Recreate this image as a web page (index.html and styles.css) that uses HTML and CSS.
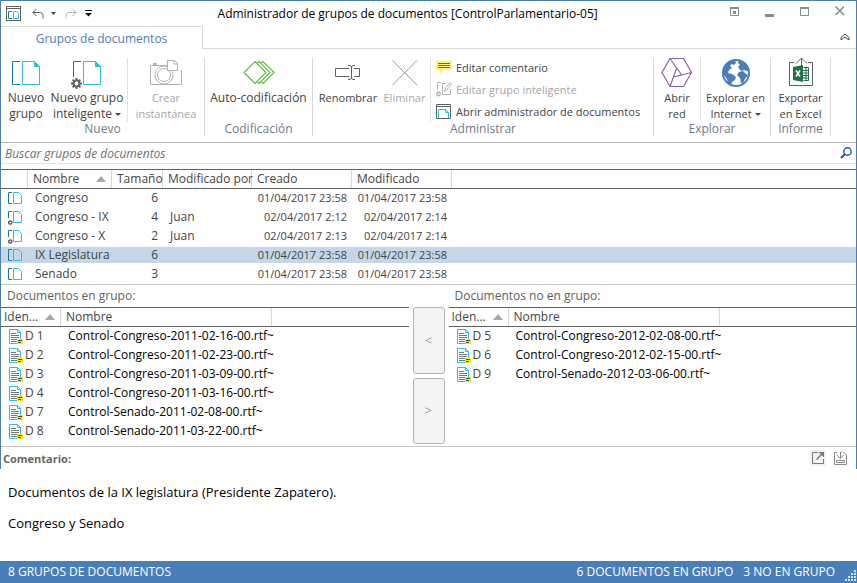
FILE: index.html
```html
<!DOCTYPE html>
<html lang="es">
<head>
<meta charset="utf-8">
<meta name="viewport" content="width=device-width, initial-scale=1">
<title>Administrador de grupos de documentos</title>
<link rel="stylesheet" href="styles.css">
</head>
<body>
<svg class="defs" aria-hidden="true">
  <symbol id="group" viewBox="0 0 16 16"><path d="M4 2.500H.5V13.500H4" fill="none" stroke="#0f7f93"/><path d="M5.500 2.500H10.500L13.500 5.500V13.500H5.500Z" fill="none" stroke="#2bbde3"/></symbol>
  <symbol id="smart" viewBox="0 0 16 16"><path d="M4 2.500H.5V9" fill="none" stroke="#0f7f93"/><path d="M5.500 2.500H10.500L13.500 5.500V13.500H5.500Z" fill="none" stroke="#2bbde3"/><circle cx="2.300" cy="13.500" r="1.600" fill="#fff" stroke="#5d6166" stroke-width="1.500"/></symbol>
  <symbol id="doc" viewBox="0 0 16 16"><path d="M9 15.500H1.500V1.500H9.500L12.500 4.500V11" fill="none" stroke="#2bbde3"/><path d="M9.500 1.500V4.500H12.500" fill="none" stroke="#2bbde3"/><path d="M3 5.500H8M3 7.500H11M3 9.500H11M3 11.500H9M3 13.500H9" stroke="#70757c"/><path d="M9 11H15V16H11L9 16Z" fill="#ffe60a"/><path d="M10 12.500H14M10 14.500H13" stroke="#4c4a20"/></symbol>
</svg>
<div class="window">
  <header class="titlebar">
    <div class="quick">
      <svg class="app" width="16" height="16" viewBox="0 0 16 16"><rect x=".5" y=".5" width="14" height="14" fill="none" stroke="#5d6166"/><path d="M0 2.500H15" stroke="#5d6166"/><path d="M6 5.500H2.500V12.500H6" fill="none" stroke="#0f7f93"/><path d="M7.500 5.500H10.500L12.500 7.500V12.500H7.500Z" fill="none" stroke="#2bbde3"/></svg>
      <button class="undo" aria-label="Deshacer"><svg width="12" height="12" viewBox="0 0 12 12" fill="none" stroke="#555"><path d="M1 4.500H7.500C10.500 4.500 11.500 6.500 11 10.500M4.500 1L1 4.500L4.500 8"/></svg></button>
      <button class="drop" aria-label="Acciones anteriores"><svg width="5" height="3" viewBox="0 0 5 3"><path d="M0 0H5L2.500 3Z" fill="#444"/></svg></button>
      <button class="redo" aria-label="Rehacer"><svg width="12" height="12" viewBox="0 0 12 12" fill="none" stroke="#b0b0b0"><path d="M11 4.500H4.500C1.500 4.500 .5 6.500 1 10.500M7.500 1L11 4.500L7.500 8"/></svg></button>
      <button class="more" aria-label="Personalizar"><svg width="7" height="7" viewBox="0 0 7 7"><path d="M0 3H7L3.500 6.500Z" fill="#111"/><path d="M0 .5H7" stroke="#111"/></svg></button>
    </div>
    <h1>Administrador de grupos de documentos [ControlParlamentario-05]</h1>
    <div class="controls">
      <button aria-label="Opciones"><svg width="12" height="12" viewBox="0 0 12 12"><path d="M1.500 2V10.500H9.500V2" fill="none" stroke="#8a8a8a"/><path d="M1 2H10V4H1ZM4 6H7V9H4Z" fill="#8a8a8a"/></svg></button>
      <button aria-label="Minimizar"><svg width="12" height="12" viewBox="0 0 12 12"><path d="M1 9H10V12H1Z" fill="#8a8a8a"/></svg></button>
      <button aria-label="Maximizar"><svg width="12" height="12" viewBox="0 0 12 12"><path d="M1.500 2V10.500H9.500V2" fill="none" stroke="#8a8a8a"/><path d="M1 2H10V4H1Z" fill="#8a8a8a"/></svg></button>
      <button aria-label="Cerrar"><svg width="12" height="12" viewBox="0 0 12 12"><path d="M1.500 1.500L10 10M10 1.500L1.500 10" stroke="#8f8f8f" stroke-width="1.700"/></svg></button>
    </div>
  </header>
  <nav class="tabs">
    <button class="tab">Grupos de documentos</button>
    <button class="collapse" aria-label="Contraer la cinta"><svg width="10" height="8" viewBox="0 0 10 8"><path d="M1 4.500L5 1L9 4.500V7L5 4L1 7Z" fill="none" stroke="#444"/></svg></button>
  </nav>
  <div class="ribbon">
    <section class="group">
      <div class="tools">
        <button class="tool large narrow"><svg width="32" height="32" viewBox="0 0 32 32"><path d="M10 3.500H2.500V26.500H10" fill="none" stroke="#0f7f93"/><path d="M12.500 3.500H24.500L29.500 8.500V26.500H12.500Z" fill="none" stroke="#2bbde3"/><path d="M24 3V9H30Z" fill="#2bbde3"/></svg><span>Nuevo<br>grupo</span></button>
        <button class="tool large wide"><svg width="32" height="32" viewBox="0 0 32 32"><path d="M10 3.500H2.500V19" fill="none" stroke="#0f7f93"/><path d="M12.500 3.500H24.500L29.500 8.500V26.500H12.500Z" fill="none" stroke="#2bbde3"/><path d="M24 3V9H30Z" fill="#2bbde3"/><path d="M5.500 20V31M0 25.500H11M1.600 21.600L9.400 29.400M9.400 21.600L1.600 29.400" stroke="#606368" stroke-width="2"/><circle cx="5.500" cy="25.500" r="3" fill="#fff" stroke="#606368" stroke-width="2.200"/></svg><span>Nuevo grupo<br>inteligente <i class="caret"></i></span></button>
        <button class="tool snap split" disabled><svg width="36" height="32" viewBox="0 0 36 32" fill="none" stroke="#b2b2b2"><path d="M20 7.500H2.500V26.500H33.500V12"/><path d="M5 6H9" stroke-width="2"/><circle cx="16" cy="17" r="9"/><circle cx="16" cy="17" r="6.500"/><path d="M19.500 2.500H26.500L29.500 5.500V12.500H19.500Z" fill="#fff"/><path d="M26 2V6H30"/></svg><span>Crear<br>instantánea</span></button>
      </div>
      <h2>Nuevo</h2>
    </section>
    <section class="group">
      <div class="tools">
        <button class="tool large auto"><svg width="32" height="32" viewBox="0 0 32 32" fill="none" stroke="#62bb46" stroke-width="1.200"><path d="M12 3.500L23 14.500L12 25.500L1 14.500ZM14 5.500L16 3.500L27 14.500L16 25.500L14 23.500M18 5.500L20 3.500L31 14.500L20 25.500L18 23.500"/></svg><span>Auto-codificación</span></button>
      </div>
      <h2>Codificación</h2>
    </section>
    <section class="group">
      <div class="tools">
        <button class="tool rename"><svg width="32" height="32" viewBox="0 0 32 32" fill="none" stroke="#5d6166"><path d="M17 10.500H3.500V18.500H17M22 10.500H27.500V18.500H22M19.500 8V21M16 7.500H18L19.500 8.500L21 7.500H23M16 21.500H18L19.500 20.500L21 21.500H23"/></svg><span>Renombrar</span></button>
        <button class="tool remove" disabled><svg width="32" height="32" viewBox="0 0 32 32" stroke="#9a9a9a"><path d="M3.500 2.500L28 27M28 2.500L3.500 27"/></svg><span>Eliminar</span></button>
        <div class="stack split">
          <button><svg width="16" height="16" viewBox="0 0 16 16"><path d="M0 2H16V11H8L4 15V11H0Z" fill="#fff07a"/><path d="M2 4.500H14M2 6.500H14M2 8.500H14" stroke="#77722f"/></svg>Editar comentario</button>
          <button disabled><svg width="16" height="16" viewBox="0 0 16 16" fill="none" stroke="#b2b2b2"><path d="M5 1.500H1.500V9M10 2.500H6.500V13.500H14.500V8"/><path d="M8.500 10.500L9 8L14 1.500L15.500 3L10.500 9.500Z"/><circle cx="2.500" cy="13" r="1.700" stroke-width="1.500"/></svg>Editar grupo inteligente</button>
          <button><svg width="16" height="16" viewBox="0 0 16 16" fill="none" stroke="#5d6166"><path d="M.5 1.500H14.500V15.500H.5ZM0 3.500H15"/><path d="M2.500 15V6.500H9.500L12.500 9.500V15M9.500 6.500V9.500H12.500" stroke="#2bbde3"/></svg>Abrir administrador de documentos</button>
        </div>
      </div>
      <h2>Administrar</h2>
    </section>
    <section class="group">
      <div class="tools">
        <button class="tool net"><svg width="32" height="32" viewBox="0 0 32 32" fill="none" stroke="#8962ac"><path d="M9 .5H22.500L30.500 14.500L22.500 28.500H9L1 14.500ZM9 .5L21 17.500M30.500 14.500L12.500 19M9 28.500L15.500 10.500" stroke-width="1.200"/></svg><span>Abrir<br>red</span></button>
        <button class="tool web split"><svg width="32" height="32" viewBox="0 0 32 32"><circle cx="16" cy="15" r="13" fill="#fff" stroke="#4a7eb6" stroke-width="2"/><path d="M4 8C7 4 11 2 15 2L16 5L14 7L12 6L10 8L12 10L9 12L8 15L12 16L16 19L15 22L12 24L11 28L8 26L7 21L4 17L3 11ZM19 2C24 3 29 8 29.500 14L27 13L24 12L22 13L20 12L18 9L20 7L18 5ZM19 14L23 13L26 16L28 17L25 21L23 25L21 25L20 20L17 17Z" fill="#4a7eb6"/></svg><span>Explorar en<br>Internet <i class="caret"></i></span></button>
      </div>
      <h2>Explorar</h2>
    </section>
    <section class="group">
      <div class="tools">
        <button class="tool excel"><svg width="32" height="32" viewBox="0 0 32 32"><path d="M9 4.500H4.500V27.500H27.500V4.500H23M16.500 9V0M11 5.500L16.500 0L22 5.500" fill="none" stroke="#5d6166"/><path d="M18.500 9.500H23.500V22.500H18.500M18 12.500H24M18 15H24M18 17.500H24M18 20H24M21 10V22" fill="none" stroke="#217346"/><path d="M8 9L18 7V24L8 22Z" fill="#217346"/><path d="M11 12.500L15 18.500M15 12.500L11 18.500" stroke="#fff" stroke-width="1.500"/></svg><span>Exportar<br>en Excel</span></button>
      </div>
      <h2>Informe</h2>
    </section>
  </div>
  <form class="search">
    <input type="text" aria-label="Buscar grupos de documentos" placeholder="Buscar grupos de documentos">
    <button type="button" aria-label="Buscar"><svg width="12" height="12" viewBox="0 0 12 12" fill="none" stroke="#1f56a5"><circle cx="7.500" cy="4.500" r="3.700" stroke-width="1.400"/><path d="M5 7L1 11" stroke-width="2"/></svg></button>
  </form>
  <table class="list groups">
    <colgroup><col class="c-icon"><col class="c-name"><col class="c-size"><col class="c-by"><col class="c-date"><col class="c-date"><col></colgroup>
    <thead><tr><th></th><th class="sorted">Nombre</th><th>Tamaño</th><th>Modificado por</th><th>Creado</th><th>Modificado</th><th></th></tr></thead>
    <tbody>
      <tr><td><svg class="ico"><use href="#group"/></svg></td><td>Congreso</td><td class="num">6</td><td></td><td class="date">01/04/2017 23:58</td><td class="date">01/04/2017 23:58</td><td></td></tr>
      <tr><td><svg class="ico"><use href="#smart"/></svg></td><td>Congreso - IX</td><td class="num">4</td><td>Juan</td><td class="date">02/04/2017 2:12</td><td class="date">02/04/2017 2:14</td><td></td></tr>
      <tr><td><svg class="ico"><use href="#smart"/></svg></td><td>Congreso - X</td><td class="num">2</td><td>Juan</td><td class="date">02/04/2017 2:13</td><td class="date">02/04/2017 2:14</td><td></td></tr>
      <tr class="selected"><td><svg class="ico"><use href="#group"/></svg></td><td>IX Legislatura</td><td class="num">6</td><td></td><td class="date">01/04/2017 23:58</td><td class="date">01/04/2017 23:58</td><td></td></tr>
      <tr><td><svg class="ico"><use href="#group"/></svg></td><td>Senado</td><td class="num">3</td><td></td><td class="date">01/04/2017 23:58</td><td class="date">01/04/2017 23:58</td><td></td></tr>
    </tbody>
  </table>
  <div class="members">
    <section>
      <h3>Documentos en grupo:</h3>
      <table class="list docs">
        <colgroup><col class="c-id"><col class="c-doc"><col></colgroup>
        <thead><tr><th class="sorted">Iden...</th><th>Nombre</th><th></th></tr></thead>
        <tbody>
          <tr><td><svg class="ico"><use href="#doc"/></svg>D 1</td><td>Control-Congreso-2011-02-16-00.rtf~</td><td></td></tr>
          <tr><td><svg class="ico"><use href="#doc"/></svg>D 2</td><td>Control-Congreso-2011-02-23-00.rtf~</td><td></td></tr>
          <tr><td><svg class="ico"><use href="#doc"/></svg>D 3</td><td>Control-Congreso-2011-03-09-00.rtf~</td><td></td></tr>
          <tr><td><svg class="ico"><use href="#doc"/></svg>D 4</td><td>Control-Congreso-2011-03-16-00.rtf~</td><td></td></tr>
          <tr><td><svg class="ico"><use href="#doc"/></svg>D 7</td><td>Control-Senado-2011-02-08-00.rtf~</td><td></td></tr>
          <tr><td><svg class="ico"><use href="#doc"/></svg>D 8</td><td>Control-Senado-2011-03-22-00.rtf~</td><td></td></tr>
        </tbody>
      </table>
    </section>
    <div class="move"><button aria-label="Añadir al grupo">&lt;</button><button aria-label="Quitar del grupo">&gt;</button></div>
    <section>
      <h3>Documentos no en grupo:</h3>
      <table class="list docs">
        <colgroup><col class="c-id"><col class="c-doc"><col></colgroup>
        <thead><tr><th class="sorted">Iden...</th><th>Nombre</th><th></th></tr></thead>
        <tbody>
          <tr><td><svg class="ico"><use href="#doc"/></svg>D 5</td><td>Control-Congreso-2012-02-08-00.rtf~</td><td></td></tr>
          <tr><td><svg class="ico"><use href="#doc"/></svg>D 6</td><td>Control-Congreso-2012-02-15-00.rtf~</td><td></td></tr>
          <tr><td><svg class="ico"><use href="#doc"/></svg>D 9</td><td>Control-Senado-2012-03-06-00.rtf~</td><td></td></tr>
        </tbody>
      </table>
    </section>
  </div>
  <div class="comment-head">
    <h3>Comentario:</h3>
    <div class="acts">
      <button class="raised" aria-label="Abrir en ventana"><svg width="14" height="14" viewBox="0 0 14 14" fill="none" stroke="#777"><path d="M7 1.500H1.500V12.500H12.500V8"/><path d="M5.500 8.500L11 3" stroke-width="1.500"/><path d="M7.500 1H13V6.500Z" fill="#777" stroke="none"/></svg></button>
      <button aria-label="Guardar comentario"><svg width="14" height="14" viewBox="0 0 14 14" fill="none" stroke="#8a8a8a"><path d="M3 1.500H.5V13.500H12.500V4L10 1.500H9M2.500 9.500H10.500V11.500H2.500ZM3 4L6 7.500L10 4M6.500 7V1H8"/></svg></button>
    </div>
  </div>
</div>
<main class="comment">
  <p>Documentos de la IX legislatura (Presidente Zapatero).</p>
  <p>Congreso y Senado</p>
</main>
<footer class="status">
  <span>8 GRUPOS DE DOCUMENTOS</span>
  <span class="right">6 DOCUMENTOS EN GRUPO</span>
  <span>3 NO EN GRUPO</span>
  <svg class="grip" width="12" height="12" viewBox="0 0 12 12" fill="#d5e2f0"><path d="M9 0h2v2h-2zM6 3h2v2h-2zM9 3h2v2h-2zM3 6h2v2h-2zM6 6h2v2h-2zM9 6h2v2h-2zM0 9h2v2h-2zM3 9h2v2h-2zM6 9h2v2h-2zM9 9h2v2h-2z"/></svg>
</footer>
</body>
</html>
```
FILE: styles.css
```css
* { box-sizing: border-box; }
body {
  margin: 0;
  min-height: 100vh;
  display: flex;
  flex-direction: column;
  background: #fff;
  color: #444;
  font: 12px/15px "Open Sans", "Noto Sans", sans-serif;
}
h1, h2, h3, p { margin: 0; font-size: inherit; font-weight: normal; }
button {
  margin: 0;
  padding: 0;
  border: 0;
  background: none;
  color: inherit;
  font: inherit;
}
button:disabled { color: #a6a6a6; }
svg { display: block; flex: none; }
.defs { position: absolute; width: 0; height: 0; }

.window { border: 1px solid #4a7eb9; border-bottom: 0; }

/* Title bar */
.titlebar {
  height: 25px;
  display: grid;
  grid-template-columns: 5fr auto 6fr;
  align-items: center;
  column-gap: 8px;
}
.titlebar h1 { color: #000; }
.quick { display: flex; align-items: center; padding-left: 5px; }
.undo { margin-left: 10px; }
.drop { margin-left: 7px; }
.redo { margin-left: 9px; }
.more { margin-left: 8px; }
.controls { display: flex; justify-content: flex-end; gap: 23px; padding: 0 10px 6px 0; }

/* Tabs */
.tabs {
  height: 23px;
  display: flex;
  justify-content: space-between;
  border-bottom: 1px solid #d9d9d9;
}
.tab {
  width: 202px;
  margin-bottom: -1px;
  border: 1px solid #d9d9d9;
  border-width: 1px 1px 0 0;
  background: #fff;
  color: #4a7eb9;
}
.collapse { padding: 0 6px; }

/* Ribbon */
.ribbon {
  height: 94px;
  display: flex;
  padding: 9px 0 6px;
  border-bottom: 1px solid #b4b4b4;
}
.group {
  display: flex;
  flex-direction: column;
  border-right: 1px solid #d9d9d9;
}
.group h2 { color: #74798a; text-align: center; line-height: 14px; }
.tools { height: 66px; display: flex; font-size: 11px; }
.tool {
  display: flex;
  flex-direction: column;
  align-items: center;
  line-height: 16px;
  white-space: nowrap;
}
.large { font-size: 12px; }
.narrow { width: 50px; }
.wide { width: 72px; margin-right: 4px; }
.snap { width: 77px; }
.auto { width: 107px; }
.rename { width: 70px; }
.remove { width: 43px; margin-right: 4px; }
.net { width: 46px; }
.web { width: 70px; }
.excel { width: 59px; }
.split { border-left: 1px solid #e2e2e2; }
.caret {
  display: inline-block;
  border: 3px solid transparent;
  border-top-color: #444;
  border-bottom: 0;
  vertical-align: 2px;
}
.stack {
  min-width: 223px;
  display: flex;
  flex-direction: column;
  gap: 4px;
  padding: 0 8px 0 5px;
}
.stack button {
  height: 18px;
  flex: none;
  display: flex;
  align-items: center;
  gap: 4px;
  white-space: nowrap;
}

/* Search */
.search {
  height: 21px;
  display: flex;
  align-items: center;
  border-bottom: 1px solid #e4e4e4;
  margin-bottom: 5px;
}
.search input {
  flex: 1;
  min-width: 0;
  padding: 0 4px;
  border: 0;
  outline: 0;
  font: italic 12px/15px "Open Sans", "Noto Sans", sans-serif;
}
.search input::placeholder { color: #707070; opacity: 1; }
.search button { padding: 0 4px; }

/* Lists */
.list {
  width: 100%;
  table-layout: fixed;
  border-collapse: separate;
  border-spacing: 0;
}
.list th {
  height: 20px;
  padding: 0 0 0 5px;
  border: 1px solid #606060;
  border-width: 1px 0;
  background: linear-gradient(#d4d4d4, #d4d4d4) right / 1px 100% no-repeat;
  line-height: 16px;
  font-weight: normal;
  text-align: left;
  white-space: nowrap;
}
.list th:last-child { background: none; }
.list td {
  height: 19px;
  padding: 0 0 0 7px;
  border: solid #fff;
  border-width: 1px 0 2px;
  line-height: 16px;
  white-space: nowrap;
}
.sorted::after {
  content: "";
  float: right;
  margin: 5px 6px 0 0;
  border: 5px solid transparent;
  border-top: 0;
  border-bottom: 6px solid #a3a8b3;
}
.ico { width: 16px; height: 16px; overflow: visible; }
.list .selected td { background: #c5d6e8; }
.groups { border-bottom: 1px solid #c6c6c6; }
.groups .num { padding: 0 5px 0 0; text-align: right; }
.groups .date { padding: 0 5px 0 0; font-size: 11px; text-align: right; }
.c-icon { width: 27px; }
.c-name { width: 84px; }
.c-size { width: 51px; }
.c-by { width: 89px; }
.c-date { width: 100px; }
.c-id { width: 60px; }
.c-doc { width: 211px; }

/* Group members */
.members {
  min-height: 162px;
  display: grid;
  grid-template-columns: 1fr 32px 1fr;
  column-gap: 4px;
  border-bottom: 1px solid #c6c6c6;
}
.members h3 { padding: 3px 6px 4px; color: #606060; }
.docs td + td { color: #000; }
.docs th:first-child { padding-left: 3px; }
.docs .ico { float: left; margin-right: 1px; }
.move { display: flex; flex-direction: column; gap: 4px; padding: 22px 0 2px; }
.move button {
  flex: 1;
  border: 1px solid #b4b4b4;
  border-radius: 3px;
  background: #f4f4f4;
  color: #9a9a9a;
}

/* Comment */
.comment-head {
  height: 22px;
  display: flex;
  align-items: center;
  justify-content: space-between;
  padding: 0 8px 0 2px;
}
.comment-head h3 { color: #666; font-weight: bold; font-size: 11px; }
.acts { display: flex; align-items: center; gap: 8px; }
.raised { padding: 1px; background: #f2f2f2; }
.comment { flex: 1; padding: 16px 8px 0; color: #000; font-size: 13px; }
.comment p { margin-bottom: 16px; }

/* Status bar */
.status {
  height: 22px;
  display: flex;
  align-items: center;
  gap: 10px;
  padding: 0 0 1px 8px;
  background: #4a7eb9;
  color: #fff;
}
.status .right { margin-left: auto; }
.grip { align-self: flex-end; }
```
